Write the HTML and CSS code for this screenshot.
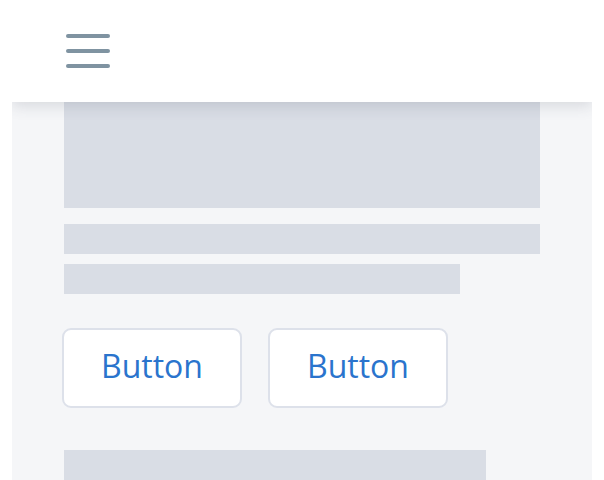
FILE: index.html
```html
<!DOCTYPE html>
<html>
<head>
<meta charset="utf-8">
<link rel="stylesheet" href="styles.css">
</head>
<body>
<div class="panel">
  <header class="header">
    <button class="menu" aria-label="Menu">
      <svg width="44" height="34" viewBox="0 0 44 34">
        <g stroke="#7f93a1" stroke-width="4" stroke-linecap="round">
          <line x1="2" y1="2" x2="42" y2="2"/>
          <line x1="2" y1="17" x2="42" y2="17"/>
          <line x1="2" y1="32" x2="42" y2="32"/>
        </g>
      </svg>
    </button>
  </header>
  <main class="content">
    <div class="ph ph-hero"></div>
    <div class="ph ph-line"></div>
    <div class="ph ph-line ph-short"></div>
    <div class="actions">
      <button class="btn">Button</button>
      <button class="btn">Button</button>
    </div>
    <div class="ph ph-bottom"></div>
  </main>
</div>
</body>
</html>
```
FILE: styles.css
```css
html, body {
  margin: 0;
  padding: 0;
  background: #ffffff;
  height: 480px;
  overflow: hidden;
}
.panel {
  margin: 0 12px;
  height: 480px;
  background: #f5f6f8;
  display: flex;
  flex-direction: column;
  overflow: hidden;
}
.header {
  position: relative;
  z-index: 2;
  height: 102px;
  flex: none;
  background: #ffffff;
  box-shadow: 0 4px 14px rgba(60, 70, 90, 0.16);
  display: flex;
  align-items: flex-start;
  padding-left: 54px;
}
.menu {
  margin: 34px 0 0 0;
  padding: 0;
  border: 0;
  background: none;
  width: 44px;
  height: 34px;
  display: block;
}
.menu svg { display: block; }
.content {
  padding: 0 52px;
  display: flex;
  flex-direction: column;
}
.ph {
  background: #d9dde5;
}
.ph-hero {
  width: 476px;
  height: 106px;
}
.ph-line {
  width: 476px;
  height: 30px;
  margin-top: 16px;
}
.ph-short {
  width: 396px;
  margin-top: 10px;
}
.actions {
  display: flex;
  gap: 26px;
  margin: 34px 0 0 -2px;
}
.btn {
  width: 180px;
  height: 80px;
  box-sizing: border-box;
  border: 2px solid #dde1ea;
  border-radius: 9px;
  background: #ffffff;
  color: #2a74cd;
  font-family: "Open Sans", "Noto Sans", sans-serif;
  font-size: 32px;
  padding: 0 0 5px 0;
}
.ph-bottom {
  width: 422px;
  height: 40px;
  margin-top: 42px;
}
```
